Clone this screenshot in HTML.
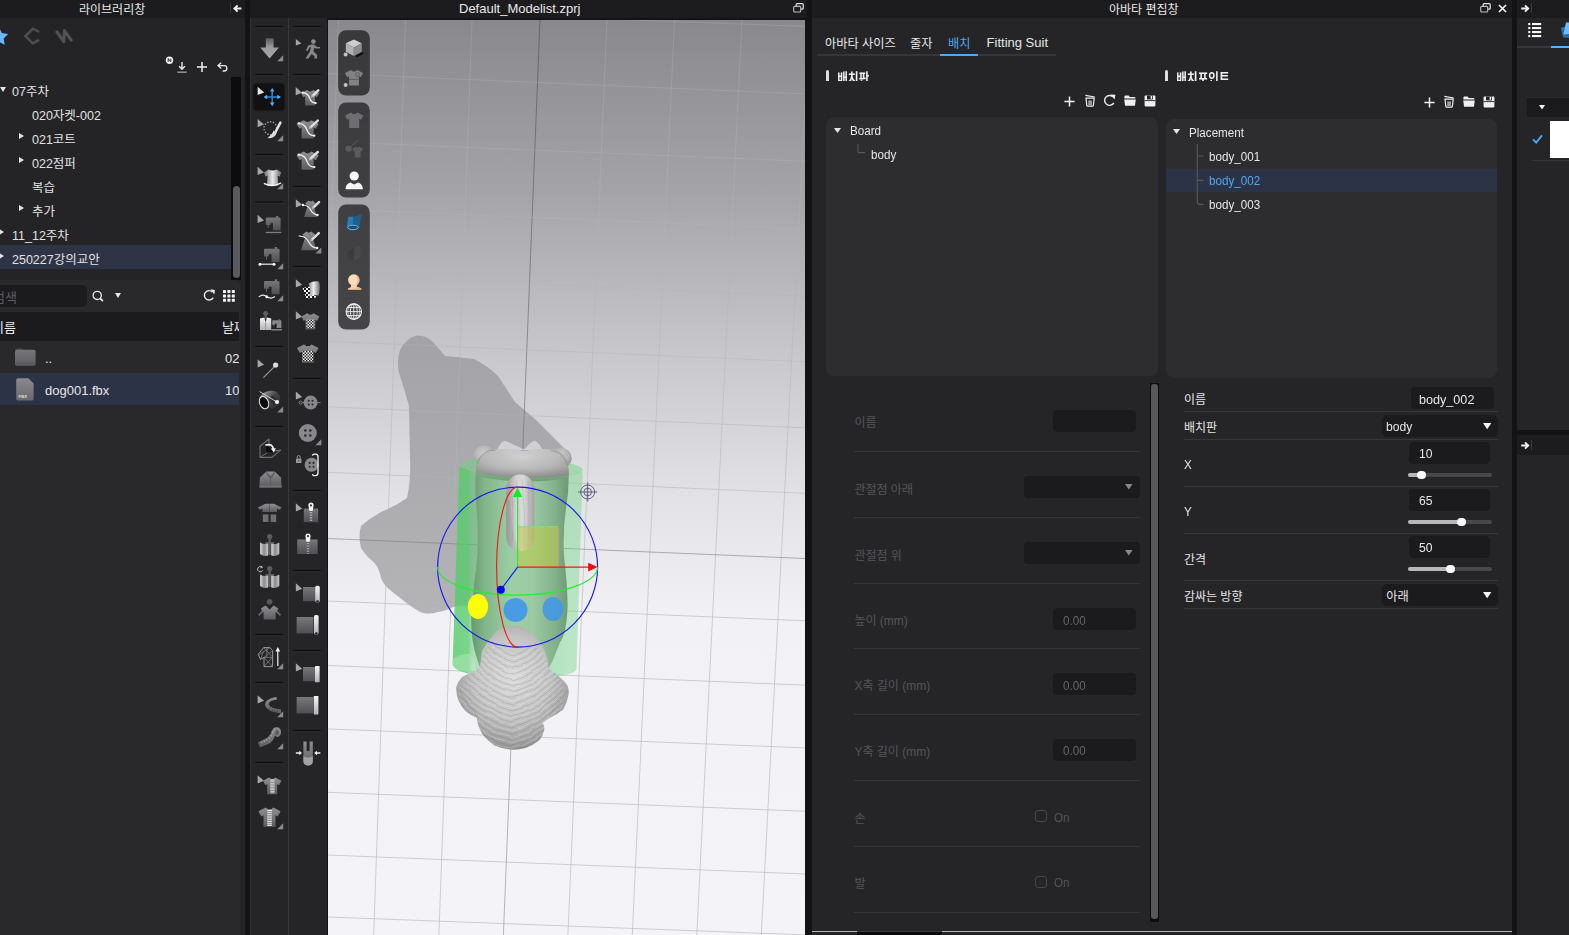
<!DOCTYPE html>
<html lang="ko">
<head>
<meta charset="utf-8">
<title>CLO - Default_Modelist.zprj</title>
<style>
*{box-sizing:border-box;margin:0;padding:0}
html,body{width:1569px;height:935px;overflow:hidden;background:#131315}
body{position:relative;font-family:"Liberation Sans","Noto Sans CJK KR",sans-serif;font-size:12px;color:#e6e6e6;-webkit-font-smoothing:antialiased}
.abs{position:absolute}
.panel{position:absolute;background:#252527}
.tbar{position:absolute;background:#1c1c1f;height:18px;top:0;color:#e8e8e8;font-size:12px;line-height:17px;text-align:center;white-space:nowrap}
.t{position:absolute;white-space:nowrap;line-height:1}
svg{position:absolute;overflow:visible}
/* LEFT */
#lib{left:0;top:18px;width:245px;height:917px;background:#242426}
.row{position:absolute;left:0;width:231px;height:24px;font-size:12.5px;line-height:23px;color:#e2e2e2;white-space:nowrap}
.row.sel{background:#2e3446}
.tri-r{position:absolute;width:0;height:0;border-left:5.4px solid #e6e6e6;border-top:3.9px solid transparent;border-bottom:3.9px solid transparent}
.tri-d{position:absolute;width:0;height:0;border-top:5px solid #e6e6e6;border-left:3.5px solid transparent;border-right:3.5px solid transparent}
/* toolbars */
#tb1{left:250px;top:18px;width:39px;height:917px;border-left:1px solid #323235;border-right:1px solid #38383b}
#tb2{left:289px;top:18px;width:38px;height:917px}
.sep{position:absolute;height:1px;width:28px;background:#0f0f11}
/* viewport */
#vp{position:absolute;left:328px;top:20px;width:477px;height:915px;overflow:hidden;background:linear-gradient(#88888d 0px,#a3a3a8 170px,#c6c6cb 330px,#e2e2e7 480px,#f1f1f6 600px,#f3f3f8 915px)}
/* avatar editor */
#av{left:812px;top:18px;width:700px;height:917px}
.tab{position:absolute;top:17px;font-size:13px;line-height:16px;color:#e8e8e8;white-space:nowrap}
.box{position:absolute;background:#2d2d30;border-radius:8px}
.tr{position:absolute;font-size:12px;line-height:24px;height:24px;color:#e4e4e4;white-space:nowrap}
.hl{position:absolute;height:1px;background:#38383b}
.inp{position:absolute;background:#1b1b1e;border-radius:4px;color:#e8e8e8;font-size:13px;white-space:nowrap}
.dis{color:#58585c}
.lx{display:inline-block;transform:scaleX(.97);transform-origin:0 50%}
</style>
</head>
<body>


<!-- ===== title bars ===== -->
<div class="tbar" style="left:0;width:245px"><span class="t" style="left:79px;top:3.8px;font-size:12px">라이브러리창</span>
  <i class="abs" style="left:230px;top:3px;width:1px;height:10px;background:#3a3a3d"></i>
  <svg style="left:233px;top:3.5px" width="9" height="9" viewBox="0 0 9 9"><path d="M8.4 4.5H2M4.6 1.4L1.4 4.5l3.2 3.1" fill="none" stroke="#f0f0f0" stroke-width="1.9"/></svg>
</div>
<div class="tbar" style="left:250px;width:557px"><span class="t" style="left:209px;top:1.7px;font-size:13px">Default_Modelist.zprj</span>
  <svg style="left:543px;top:3px" width="11" height="10" viewBox="0 0 11 10"><rect x="3.2" y="0.6" width="7" height="5.6" rx="1" fill="none" stroke="#e6e6e6" stroke-width="1.2"/><rect x="0.7" y="3.4" width="7" height="5.6" rx="1" fill="#1c1c1f" stroke="#bdbdbd" stroke-width="1.1"/></svg>
</div>
<div class="tbar" style="left:812px;width:700px"><span class="t" style="left:297px;top:3.8px;font-size:12px">아바타 편집창</span>
  <svg style="left:668px;top:3px" width="11" height="10" viewBox="0 0 11 10"><rect x="3.2" y="0.6" width="7" height="5.6" rx="1" fill="none" stroke="#e6e6e6" stroke-width="1.2"/><rect x="0.7" y="3.4" width="7" height="5.6" rx="1" fill="#1c1c1f" stroke="#bdbdbd" stroke-width="1.1"/></svg>
  <svg style="left:686px;top:4px" width="9" height="9" viewBox="0 0 9 9"><path d="M1 1L8 8M8 1L1 8" stroke="#f2f2f2" stroke-width="1.7"/></svg>
</div>
<div class="tbar" style="left:1517px;width:52px">
  <svg style="left:4px;top:4px" width="9" height="9" viewBox="0 0 9 9"><path d="M0.2 4.5H6.6M4 1.4L7.2 4.5 4 7.6" fill="none" stroke="#f0f0f0" stroke-width="1.9"/></svg>
  <i class="abs" style="left:14px;top:3px;width:1px;height:10px;background:#3a3a3d"></i>
</div>

<div id="lib" class="panel">
  <!-- top icons (coords relative to panel: y = abs-18) -->
  <svg style="left:0;top:0" width="80" height="30" viewBox="0 18 80 30"><path d="M-1 27.2l2.8 5.8 6.4 1 -4.6 4.5 1.1 6.3 -5.7 -3 -5.7 3 1.1 -6.3 -4.6 -4.5 6.4 -1z" fill="#69b8ff"/><path d="M39.6 32.4L33.4 29.2 26 36.4 33.4 43.6 39.6 40.2" fill="none" stroke="#38383b" stroke-width="2.4"/><path d="M38.8 31.6L32.6 28.6 25.2 36 32.6 43.4 38.8 39.8" fill="none" stroke="#4e4e52" stroke-width="2.2"/><path d="M57 32L63.8 41.6 64.4 30.6 71.2 40.2" fill="none" stroke="#525256" stroke-width="3.1" stroke-linecap="round" stroke-linejoin="round"/></svg>
  <!-- small action icons -->
  <svg style="left:165px;top:38px" width="9" height="9" viewBox="0 0 9 9"><circle cx="4.5" cy="4.2" r="3.7" fill="#f2f2f2"/><path d="M3.2 5.8V2.6L5.8 5.8V2.6" fill="none" stroke="#2a2a2d" stroke-width="1"/></svg>
  <svg style="left:177px;top:43px" width="10" height="13" viewBox="0 0 10 13"><path d="M5 1V8M2.1 5.2L5 8.2 7.9 5.2" fill="none" stroke="#e8e8e8" stroke-width="1.4"/><path d="M0.4 11.2H9.6" stroke="#8e8e92" stroke-width="1.6"/></svg>
  <svg style="left:197px;top:44px" width="10" height="10" viewBox="0 0 10 10"><path d="M5 0V10M0 5H10" stroke="#f0f0f0" stroke-width="1.5"/></svg>
  <svg style="left:217px;top:44px" width="11" height="10" viewBox="0 0 11 10"><path d="M4.2 0.8L1 3.6l3.2 2.8M1.2 3.6H7.2a2.7 2.7 0 0 1 0 5.4H5.6" fill="none" stroke="#e8e8e8" stroke-width="1.3"/></svg>

  <!-- tree -->
  
  <div class="row" style="top:59.2px"><i class="tri-d" style="left:0;top:9.8px"></i><span class="t" style="left:12px;top:8.4px">07주차</span></div>
  <div class="row" style="top:83.2px"><span class="t" style="left:32px;top:8.4px">020자켓-002</span></div>
  <div class="row" style="top:107.2px"><i class="tri-r" style="left:19px;top:7.8px"></i><span class="t" style="left:32px;top:8.4px">021코트</span></div>
  <div class="row" style="top:131.2px"><i class="tri-r" style="left:19px;top:7.8px"></i><span class="t" style="left:32px;top:8.4px">022점퍼</span></div>
  <div class="row" style="top:155.2px"><span class="t" style="left:32px;top:8.4px">복습</span></div>
  <div class="row" style="top:179.2px"><i class="tri-r" style="left:19px;top:7.8px"></i><span class="t" style="left:32px;top:8.4px">추가</span></div>
  <div class="row" style="top:203.2px"><i class="tri-r" style="left:-1px;top:7.8px"></i><span class="t" style="left:12px;top:8.4px">11_12주차</span></div>
  <div class="row sel" style="top:227.2px"><i class="tri-r" style="left:-1px;top:7.8px"></i><span class="t" style="left:12px;top:8.4px">250227강의교안</span></div>
  <!-- scrollbar -->
  <div class="abs" style="left:231px;top:59px;width:10px;height:203px;background:#0c0c0e"></div>
  <div class="abs" style="left:233px;top:168px;width:7px;height:92px;background:#5a5a5d;border-radius:3.5px"></div>

  <!-- file browser -->
  <div class="abs" style="left:0;top:262px;width:240px;height:655px;background:#29292c;border-top-right-radius:6px"></div>
  <div class="abs" style="left:-6px;top:267px;width:93px;height:22px;background:#1b1b1e;border-radius:5px"></div>
  <span class="t" style="left:-7px;top:273px;font-size:13px;color:#5d5d61">검색</span>
  <svg style="left:91px;top:271px" width="14" height="14" viewBox="0 0 14 14"><circle cx="6.2" cy="6.4" r="4.1" fill="none" stroke="#ececec" stroke-width="1.3"/><path d="M9.4 9.6L11.4 11.6" stroke="#ececec" stroke-width="1.8" stroke-linecap="round"/></svg>
  <i class="tri-d" style="left:114.5px;top:275px"></i>
  <svg style="left:202px;top:271px" width="14" height="13" viewBox="0 0 14 13"><path d="M11.2 8.6A4.7 4.7 0 1 1 10.4 3" fill="none" stroke="#ececec" stroke-width="1.4"/><path d="M8 0.6h4.6v4.6z" fill="#ececec" transform="rotate(8 10 3)"/></svg>
  <svg style="left:223px;top:272px" width="12" height="12" viewBox="0 0 12 12" fill="#f2f2f2"><rect x="0" y="0" width="3" height="3" rx=".5"/><rect x="4.4" y="0" width="3" height="3" rx=".5"/><rect x="8.8" y="0" width="3" height="3" rx=".5"/><rect x="0" y="4.4" width="3" height="3" rx=".5"/><rect x="4.4" y="4.4" width="3" height="3" rx=".5"/><rect x="8.8" y="4.4" width="3" height="3" rx=".5"/><rect x="0" y="8.8" width="3" height="3" rx=".5"/><rect x="4.4" y="8.8" width="3" height="3" rx=".5"/><rect x="8.8" y="8.8" width="3" height="3" rx=".5"/></svg>
  <!-- header -->
  <div class="abs" style="left:0;top:294px;width:239px;height:29px;background:#1b1b1e;overflow:hidden">
    <span class="t" style="left:-8px;top:9px;font-size:13px;color:#ececec">이름</span>
    <span class="t" style="left:222px;top:9px;font-size:13px;color:#ececec">날짜</span>
  </div>
  <!-- rows -->
  <div class="abs" style="left:0;top:323px;width:239px;height:32px;overflow:hidden">
    <svg style="left:15px;top:7px" width="21" height="18" viewBox="0 0 21 18"><defs><linearGradient id="fg" x1="0" y1="0" x2="0" y2="1"><stop offset="0" stop-color="#77777b"/><stop offset="1" stop-color="#5c5c60"/></linearGradient></defs><path d="M0 2.2Q0 0.4 1.6 0.4H7l1.6 1.4H0z" fill="#4a4a4e"/><rect x="0" y="1.8" width="20.6" height="16" rx="1.8" fill="url(#fg)"/><path d="M0.4 15.2H20.2" stroke="#505054" stroke-width=".8"/></svg>
    <span class="t" style="left:45px;top:11px;font-size:13px">..</span>
    <span class="t" style="left:225px;top:11px;font-size:13px">02</span>
  </div>
  <div class="abs" style="left:0;top:355px;width:239px;height:32px;background:#2d3346;overflow:hidden">
    <svg style="left:16px;top:5px" width="18" height="23" viewBox="0 0 18 23"><defs><linearGradient id="fg2" x1="0" y1="0" x2="0" y2="1"><stop offset="0" stop-color="#8a8a8e"/><stop offset="1" stop-color="#6a6a6e"/></linearGradient></defs><path d="M1.8 0.3H12.4L17.6 5.6V20.8Q17.6 22.4 16 22.4H1.8Q0.2 22.4 0.2 20.8V1.9Q0.2 0.3 1.8 0.3z" fill="url(#fg2)"/><text x="2.6" y="19.6" font-family="Liberation Sans,sans-serif" font-size="4.2" font-weight="700" fill="#dedede">FBX</text></svg>
    <span class="t" style="left:45px;top:11px;font-size:13px">dog001.fbx</span>
    <span class="t" style="left:225px;top:11px;font-size:13px">10</span>
  </div>
</div>

<!-- ===== TOOLBARS ===== -->
<div id="tb1" class="panel"></div>
<div id="tb2" class="panel"></div>
<svg style="left:250px;top:18px" width="77" height="917" viewBox="250 18 77 917">
<defs>
<linearGradient id="g1" x1="0" y1="0" x2="0" y2="1"><stop offset="0" stop-color="#909094"/><stop offset="1" stop-color="#5c5c60"/></linearGradient>
<linearGradient id="g2" x1="0" y1="0" x2="0" y2="1"><stop offset="0" stop-color="#77777b"/><stop offset="1" stop-color="#505054"/></linearGradient>
<linearGradient id="g3" x1="0" y1="0" x2="0" y2="1"><stop offset="0" stop-color="#5a5a5e"/><stop offset=".45" stop-color="#9c9ca0"/><stop offset="1" stop-color="#a4a4a8"/></linearGradient>
<linearGradient id="gw" x1="0" y1="0" x2="0" y2="1"><stop offset="0" stop-color="#f6f6f6"/><stop offset="1" stop-color="#b4b4b8"/></linearGradient>
<linearGradient id="gh" x1="0" y1="0" x2="1" y2="0"><stop offset="0" stop-color="#6a6a6e"/><stop offset=".5" stop-color="#e8e8e8"/><stop offset="1" stop-color="#6a6a6e"/></linearGradient>
<linearGradient id="gh2" x1="0" y1="0" x2="1" y2="0"><stop offset="0" stop-color="#f0f0f0"/><stop offset=".5" stop-color="#77777b"/><stop offset="1" stop-color="#f0f0f0"/></linearGradient>
<pattern id="chk" width="3" height="3" patternUnits="userSpaceOnUse"><rect width="3" height="3" fill="#fafafa"/><rect width="1.5" height="1.5" fill="#222"/><rect x="1.5" y="1.5" width="1.5" height="1.5" fill="#222"/></pattern>
<pattern id="chk2" width="4" height="4" patternUnits="userSpaceOnUse"><rect width="4" height="4" fill="#f4f4f4"/><rect width="2" height="2" fill="#161618"/><rect x="2" y="2" width="2" height="2" fill="#161618"/></pattern>
</defs>
<rect x="255" y="26" width="28" height="1.3" fill="#0e0e10"/><rect x="255" y="27.3" width="28" height=".9" fill="#2f2f32"/>
<rect x="255" y="74" width="28" height="1.3" fill="#0e0e10"/><rect x="255" y="75.3" width="28" height=".9" fill="#2f2f32"/>
<rect x="255" y="154" width="28" height="1.3" fill="#0e0e10"/><rect x="255" y="155.3" width="28" height=".9" fill="#2f2f32"/>
<rect x="255" y="201.5" width="28" height="1.3" fill="#0e0e10"/><rect x="255" y="202.8" width="28" height=".9" fill="#2f2f32"/>
<rect x="255" y="346" width="28" height="1.3" fill="#0e0e10"/><rect x="255" y="347.3" width="28" height=".9" fill="#2f2f32"/>
<rect x="255" y="426" width="28" height="1.3" fill="#0e0e10"/><rect x="255" y="427.3" width="28" height=".9" fill="#2f2f32"/>
<rect x="255" y="634" width="28" height="1.3" fill="#0e0e10"/><rect x="255" y="635.3" width="28" height=".9" fill="#2f2f32"/>
<rect x="255" y="682" width="28" height="1.3" fill="#0e0e10"/><rect x="255" y="683.3" width="28" height=".9" fill="#2f2f32"/>
<rect x="255" y="762" width="28" height="1.3" fill="#0e0e10"/><rect x="255" y="763.3" width="28" height=".9" fill="#2f2f32"/>
<rect x="293" y="26" width="28" height="1.3" fill="#0e0e10"/><rect x="293" y="27.3" width="28" height=".9" fill="#2f2f32"/>
<rect x="293" y="74" width="28" height="1.3" fill="#0e0e10"/><rect x="293" y="75.3" width="28" height=".9" fill="#2f2f32"/>
<rect x="293" y="186" width="28" height="1.3" fill="#0e0e10"/><rect x="293" y="187.3" width="28" height=".9" fill="#2f2f32"/>
<rect x="293" y="266" width="28" height="1.3" fill="#0e0e10"/><rect x="293" y="267.3" width="28" height=".9" fill="#2f2f32"/>
<rect x="293" y="378" width="28" height="1.3" fill="#0e0e10"/><rect x="293" y="379.3" width="28" height=".9" fill="#2f2f32"/>
<rect x="293" y="490" width="28" height="1.3" fill="#0e0e10"/><rect x="293" y="491.3" width="28" height=".9" fill="#2f2f32"/>
<rect x="293" y="570" width="28" height="1.3" fill="#0e0e10"/><rect x="293" y="571.3" width="28" height=".9" fill="#2f2f32"/>
<rect x="293" y="650" width="28" height="1.3" fill="#0e0e10"/><rect x="293" y="651.3" width="28" height=".9" fill="#2f2f32"/>
<rect x="293" y="730" width="28" height="1.3" fill="#0e0e10"/><rect x="293" y="731.3" width="28" height=".9" fill="#2f2f32"/>
<path d="M265.8 38.2H273.6V47.4H279L269.6 58.4 260.2 47.4H265.8z" fill="url(#g3)"/>
<path d="M283.2 55.2V61.2H277.2z" fill="#8a8a8e"/>
<rect x="253" y="83.2" width="31.8" height="27.5" rx="3.6" fill="#111113" stroke="#1d1d20" stroke-width="1"/>
<path d="M257.6 86.7V95.10000000000001L264.20000000000005 92.412z" fill="#e2e2e2"/>
<path d="M272.2 90V104M265.6 97H279" stroke="#2f86d6" stroke-width="1.5"/>
<path d="M272.2 88l2.2 3.6h-4.4zM272.2 106.2l2.2-3.6h-4.4zM263.6 97l3.6-2.2v4.4zM281 97l-3.6-2.2v4.4z" fill="#4fb0ff"/>
<path d="M257.6 119V127.2L264.0 124.576z" fill="#a6a6aa"/>
<circle cx="270.4" cy="128.2" r="6.4" fill="none" stroke="#b4b4b8" stroke-width="1.2" stroke-dasharray="1.3 1.6"/>
<path d="M280.4 122.6L276.2 130.6" stroke="#e2e2e2" stroke-width="2.5" stroke-linecap="round"/>
<path d="M277 132L273.8 130.4Q272.4 134.4 267.6 138Q275 139 277 132z" fill="#dcdcdc"/>
<path d="M283.2 135.2V141.2H277.2z" fill="#8a8a8e"/>
<path d="M257.6 166.8V175.0L264.0 172.376z" fill="#a6a6aa"/>
<path d="M268.6 169.4Q272.6 171.6 276.6 169.4L281.4 172.6 279.6 176.8 277.6 175.6 278.2 185.6H267L267.6 175.6 265.6 176.8 263.8 172.6z" fill="url(#gh)"/>
<path d="M264.4 183.6Q272.4 187.6 280.6 183.2" fill="none" stroke="#f4f4f4" stroke-width="1.5" stroke-linecap="round"/>
<path d="M283.2 183.2V189.2H277.2z" fill="#8a8a8e"/>
<path d="M257.6 214.8V223.0L264.0 220.376z" fill="#a6a6aa"/>
<path d="M265.8 218.79999999999998Q265.8 217.6 267.0 217.6H279.40000000000003Q280.6 217.6 280.6 218.79999999999998V230.2H273.0V223.0H270.40000000000003V225.0H265.8z" fill="url(#g2)"/>
<rect x="276.0" y="216.0" width="2.2" height="1.8" fill="#77777b"/>
<path d="M268.2 225.0V228.0" stroke="#6c6c70" stroke-width="0.9"/>
<rect x="265.8" y="231.8" width="15.4" height="1.3" fill="#808084"/>
<path d="M264 249.91Q264 248.65 265.26 248.65H278.28Q279.54 248.65 279.54 249.91V261.88H271.56V254.32H268.83V256.42H264z" fill="url(#g2)"/>
<rect x="274.71" y="246.97" width="2.3100000000000005" height="1.8900000000000001" fill="#77777b"/>
<path d="M266.52 256.42V259.57" stroke="#6c6c70" stroke-width="0.9450000000000001"/>
<path d="M260 264.2H274" stroke="#e8e8e8" stroke-width="1.2"/><circle cx="260" cy="264.2" r="1.5" fill="#f4f4f4"/><circle cx="274" cy="264.2" r="1.5" fill="#f4f4f4"/>
<path d="M283.2 263.2V269.2H277.2z" fill="#8a8a8e"/>
<path d="M264 282.31Q264 281.05 265.26 281.05H278.28Q279.54 281.05 279.54 282.31V294.28H271.56V286.72H268.83V288.82H264z" fill="url(#g2)"/>
<rect x="274.71" y="279.37" width="2.3100000000000005" height="1.8900000000000001" fill="#77777b"/>
<path d="M266.52 288.82V291.97" stroke="#6c6c70" stroke-width="0.9450000000000001"/>
<path d="M259.2 296.6Q263 293.6 266.8 296.6T274.6 296.8" fill="none" stroke="#f4f4f4" stroke-width="1.2" stroke-linecap="round"/>
<circle cx="266.8" cy="296.8" r="1.5" fill="#f4f4f4"/>
<path d="M283.2 295.2V301.2H277.2z" fill="#8a8a8e"/>
<circle cx="265.6" cy="313.4" r="2.4" fill="#5e5e62"/><rect x="264.6" y="314" width="2" height="5" fill="#5e5e62"/>
<path d="M260 318.6L264.2 317.4 265.6 322 267 317.4 271.2 318.6V330H260z" fill="url(#gw)"/>
<path d="M265.6 322V330" stroke="#8a8a8e" stroke-width=".8"/>
<path d="M272.2 320.964Q272.2 320.22 272.944 320.22H280.632Q281.376 320.22 281.376 320.964V328.03200000000004H276.664V323.56800000000004H275.05199999999996V324.80800000000005H272.2z" fill="#88888c"/>
<rect x="278.524" y="319.228" width="1.364" height="1.116" fill="#77777b"/>
<path d="M273.688 324.80800000000005V326.668" stroke="#6c6c70" stroke-width="0.558"/>
<rect x="271.4" y="329.2" width="10.6" height="1.2" fill="#98989c"/>
<path d="M257.6 359.2V367.4L264.0 364.776z" fill="#a6a6aa"/>
<path d="M263.4 377.6L274.4 366.6" stroke="#9a9a9e" stroke-width="1.2"/><circle cx="275.6" cy="365" r="2.6" fill="#dcdcdc"/>
<defs><linearGradient id="gc" x1="0" y1="0" x2="1" y2="1"><stop offset="0" stop-color="#b4b4b8"/><stop offset=".5" stop-color="#444448"/><stop offset="1" stop-color="#2a2a2d"/></linearGradient></defs>
<path d="M259.2 397.2Q266 388.6 276 391.4Q281.4 394.4 279.6 402.4Q277 409 268 408.4z" fill="url(#gc)"/>
<ellipse cx="264" cy="402.6" rx="4.4" ry="6.4" transform="rotate(-22 264 402.6)" fill="#0c0c0e" stroke="#e8e8e8" stroke-width="1"/>
<ellipse cx="273.6" cy="400.4" rx="2.8" ry="4.4" transform="rotate(-22 273.6 400.4)" fill="#2c2c2f"/>
<path d="M259.6 391.6L276 401.4" stroke="#d8d8d8" stroke-width=".9"/><circle cx="277" cy="402" r="2.1" fill="#f0f0f0"/>
<path d="M283.2 406.6V412.6H277.2z" fill="#8a8a8e"/>
<path d="M260 446.2L269 439V451.6L280.6 450 272 457.4H260z" fill="none" stroke="#707074" stroke-width="1.1" stroke-linejoin="round"/>
<path d="M260 457.4L269 451.6" stroke="#707074" stroke-width="1"/>
<path d="M266.4 444.6L274.6 452 266.4 452.6z" fill="#0a0a0c"/>
<path d="M265.4 445.2Q272.4 442.8 273.6 449.6" fill="none" stroke="#f4f4f4" stroke-width="1.7"/><path d="M270.8 448.6L275.8 448.2 273.8 452.6z" fill="#f4f4f4"/>
<path d="M266.4 471.6H274.6L281 477.6 281.6 486.6H259.4L260 477.6z" fill="url(#g1)"/>
<path d="M266.4 471.6L270.5 476.6 274.6 471.6V474L270.5 479 266.4 474z" fill="#5c5c60"/>
<path d="M270.5 478V486" stroke="#5a5a5e" stroke-width=".8"/><rect x="259.4" y="486" width="22.2" height="2" fill="#5a5a5e"/><path d="M259.4 486.2H281.6" stroke="#8a8a8e" stroke-width=".7"/>
<path d="M265.4 503.8H269.6V512H262.4V508.4L260 510 257.8 507.6z" fill="url(#g1)"/>
<path d="M274 503.8H269.9V512H277V508.4L279.4 510 281.6 507.6z" fill="url(#g1)"/>
<rect x="262.8" y="514.4" width="5.6" height="7.6" fill="#707074"/><rect x="270.6" y="514.4" width="5.6" height="7.6" fill="#707074"/>
<defs><linearGradient id="ghf" x1="0" y1="0" x2="1" y2="0"><stop offset="0" stop-color="#d8d8d8"/><stop offset=".5" stop-color="#8a8a8e"/><stop offset="1" stop-color="#c8c8c8"/></linearGradient></defs>
<circle cx="269.7" cy="536.6" r="2.7" fill="#5a5a5e"/><path d="M268.5 538H270.9V542H274.09999999999997V555H265.3V542H268.5z" fill="#5a5a5e"/>
<path d="M260.09999999999997 542.4Q263.7 545 268.09999999999997 543.6V555.6Q263.7 556.8 260.09999999999997 554z" fill="url(#ghf)"/>
<path d="M279.3 542.4Q275.7 545 271.3 543.6V555.6Q275.7 556.8 279.3 554z" fill="url(#ghf)"/>
<circle cx="269.7" cy="568.6" r="2.7" fill="#5a5a5e"/><path d="M268.5 570H270.9V574H274.09999999999997V587H265.3V574H268.5z" fill="#5a5a5e"/>
<path d="M260.09999999999997 574.4Q263.7 577 268.09999999999997 575.6V587.6Q263.7 588.8 260.09999999999997 586z" fill="url(#ghf)"/>
<path d="M279.3 574.4Q275.7 577 271.3 575.6V587.6Q275.7 588.8 279.3 586z" fill="url(#ghf)"/>
<path d="M262.6 570.2A2.6 2.6 0 1 1 261.8 567.2" fill="none" stroke="#b8b8bc" stroke-width="1"/><path d="M260.8 565.4L263.2 567.2 260.6 568.4z" fill="#b8b8bc"/>
<circle cx="269.6" cy="601.8" r="2.8" fill="#58585c"/>
<path d="M258.2 614.6L263.2 609.4 262.8 612.4 259.2 616zM281 614.6L276 609.4 276.4 612.4 280 616z" fill="#6a6a6e"/>
<path d="M265.6 605.4L269.6 609.4 273.6 605.4 278.4 608.6 276.4 612.6 275.6 612V619.6H263.6V612L262.8 612.6 260.8 608.6z" fill="url(#g1)"/>
<path d="M263.6 647.6H270L272.6 650.6V666.6H264V657.4L260.4 659.4 258.2 654.4z" fill="none" stroke="#9a9a9e" stroke-width="1" stroke-linejoin="round"/>
<path d="M263.6 647.6L272.6 657M270 647.6L258.6 655M264 657.4L272.6 650.6M264 657.4H272.6M264 666.6L272.6 657M264 657.4L272.6 666.6M266.8 647.6V657.4M260.4 659.4L263.6 651" fill="none" stroke="#8a8a8e" stroke-width=".7"/>
<path d="M277.8 651V666" stroke="#f2f2f2" stroke-width="1.2"/><path d="M277.8 647l2.4 4.6h-4.8z" fill="#f2f2f2"/>
<path d="M283.2 663.2V669.2H277.2z" fill="#8a8a8e"/>
<path d="M257.6 695.2V703.4000000000001L264.0 700.7760000000001z" fill="#a6a6aa"/>
<path d="M276.6 697Q264 699 265.2 705.6Q267 712 281 713.4V709.6Q270.4 708.4 268.6 704.6Q268.6 700.6 276.8 699.8z" fill="url(#g1)"/>
<path d="M270 707.6v2M272.4 708.8v2M274.8 709.6v2M277.2 710v2" stroke="#3a3a3d" stroke-width=".6"/>
<path d="M283.2 711.2V717.2H277.2z" fill="#8a8a8e"/>
<path d="M258 742.6L267.6 737.6Q271 735 272 730.6Q274 726 278.6 727.6Q282.4 730.6 280.4 735Q277.6 738.6 274.8 735.6Q273.6 741 269.6 743.4L260 747.4z" fill="url(#g1)"/>
<path d="M276.6 729.4Q279.8 731 278.4 734.4Q276.4 736 274.8 733.6" fill="#5a5a5e"/>
<path d="M261.4 741.4l.8 1.8M263.8 740.2l.8 1.8M266.2 739l.8 1.8M268.6 737.4l1 1.6M270.6 735l1.4 1.2M271.8 732l1.6.6" stroke="#d8d8d8" stroke-width=".6"/>
<path d="M283.2 743.2V749.2H277.2z" fill="#8a8a8e"/>
<path d="M257.6 775.2V783.4000000000001L264.0 780.7760000000001z" fill="#a6a6aa"/>
<path d="M269.1 777.4Q272.2 780.8 275.3 777.4L281.4 780.8 279.0 785.3 277.2 784.1 277.2 794.2 267.2 794.2 267.2 784.1 265.4 785.3 263.0 780.8z" fill="url(#g1)"/>
<rect x="270.4" y="779.6" width="4" height="13.6" fill="#f2f2f2"/><path d="M270.4 781h4M270.4 782.6h4M270.4 784.2h4M270.4 785.8h4M270.4 787.4h4M270.4 789h4M270.4 790.6h4M270.4 792.2h4" stroke="#333" stroke-width=".55"/>
<path d="M265.7 807.4Q269.5 811.3 273.3 807.4L280.6 811.3 277.7 816.5 275.5 815.2 275.5 826.8 263.5 826.8 263.5 815.2 261.3 816.5 258.4 811.3z" fill="url(#g1)"/>
<rect x="267.2" y="810" width="4.6" height="15.8" fill="#f2f2f2"/><path d="M267.2 811.6h4.6M267.2 813.4h4.6M267.2 815.2h4.6M267.2 817h4.6M267.2 818.8h4.6M267.2 820.6h4.6M267.2 822.4h4.6M267.2 824.2h4.6" stroke="#333" stroke-width=".6"/>
<path d="M283.2 823.2V829.2H277.2z" fill="#8a8a8e"/>
<path d="M295.8 39V45.6L301.40000000000003 43.488z" fill="#a6a6aa"/>
<circle cx="313.4" cy="41.6" r="2.3" fill="#8c8c90"/>
<path d="M311.6 44.4L308.2 45.6 306 50.4 307.6 51 309.6 47.4 311 47 309.6 52.2 305.4 58.6H308.6L311.6 54 314.6 56.2 314.4 58.6H317L317.2 55 313.4 51.6 314.4 48 316.4 48.6H320V47H317L314 44.6z" fill="#87878b"/>
<path d="M295.7 87.1V95.3L302.09999999999997 92.67599999999999z" fill="#a6a6aa"/>
<path d="M307.0 90.0Q310.1 93.1 313.2 90.0L319.2 93.1 316.8 97.2 315.0 96.2 315.0 105.4 305.2 105.4 305.2 96.2 303.4 97.2 301.0 93.1z" fill="url(#g1)"/>
<path d="M302.8 92.6Q307.9 93.1 309.6 98.0T315.6 103.1" fill="none" stroke="#f4f4f4" stroke-width="1.25" stroke-linecap="round"/>
<circle cx="302.8" cy="92.6" r="1.15" fill="#f4f4f4"/><circle cx="315.6" cy="103.1" r="1.15" fill="#f4f4f4"/>
<path d="M318.3 90.4L313.0 95.5" stroke="#dedede" stroke-width="2.5" stroke-linecap="round"/>
<path d="M313.8 96.4L310.6 97.7L312.1 94.6z" fill="#b8b8bc"/>
<path d="M303.8 120.2Q307.6 123.8 311.4 120.2L318.7 123.8 315.8 128.8 313.6 127.5 313.6 138.4 301.6 138.4 301.6 127.5 299.4 128.8 296.5 123.8z" fill="url(#g1)"/>
<path d="M298.7 123.3Q304.9 123.8 306.9 129.7T314.3 135.7" fill="none" stroke="#f4f4f4" stroke-width="1.25" stroke-linecap="round"/>
<circle cx="298.7" cy="123.3" r="1.15" fill="#f4f4f4"/><circle cx="314.3" cy="135.7" r="1.15" fill="#f4f4f4"/>
<path d="M317.8 120.6L310.6 127.1" stroke="#dedede" stroke-width="2.5" stroke-linecap="round"/>
<path d="M311.5 128.1L308.3 129.3L309.8 126.2z" fill="#b8b8bc"/>
<path d="M303.8 151.6Q307.6 155.2 311.4 151.6L318.7 155.2 315.8 160.2 313.6 158.9 313.6 169.8 301.6 169.8 301.6 158.9 299.4 160.2 296.5 155.2z" fill="url(#g1)"/>
<path d="M298.7 154.7Q304.9 155.2 306.9 161.1T314.3 167.1" fill="none" stroke="#f4f4f4" stroke-width="1.25" stroke-linecap="round"/>
<circle cx="298.7" cy="154.7" r="1.15" fill="#f4f4f4"/><circle cx="314.3" cy="167.1" r="1.15" fill="#f4f4f4"/>
<path d="M317.8 152.0L310.6 158.5" stroke="#dedede" stroke-width="2.5" stroke-linecap="round"/>
<path d="M311.5 159.5L308.3 160.7L309.8 157.6z" fill="#b8b8bc"/>
<path d="M295.8 199.2V207.39999999999998L302.2 204.77599999999998z" fill="#a6a6aa"/>
<path d="M308.6 200.6Q310.6 202.6 312.6 200.6L315.8 203.2 313.8 206.5 317.1 217.0 304.1 217.0 307.4 206.5 305.4 203.2z" fill="url(#g1)"/>
<path d="M302.6 205.0Q308.3 205.2 310.6 209.8T317.5 215.0" fill="none" stroke="#f4f4f4" stroke-width="1.25" stroke-linecap="round"/>
<path d="M319.0 202.2L313.8 207.2" stroke="#dedede" stroke-width="2.5" stroke-linecap="round"/>
<path d="M314.6 208.1L311.5 209.5L312.9 206.3z" fill="#b8b8bc"/>
<circle cx="303" cy="205" r="1.2" fill="#f4f4f4"/><circle cx="317.4" cy="215" r="1.2" fill="#f4f4f4"/>
<path d="M306.3 231.6Q308.8 233.8 311.3 231.6L315.1 234.6 312.7 238.3 316.7 250.2 300.9 250.2 304.9 238.3 302.5 234.6z" fill="url(#g1)"/>
<path d="M299.2 236.0Q306.0 236.2 308.8 242.0T317.2 248.0" fill="none" stroke="#f4f4f4" stroke-width="1.25" stroke-linecap="round"/>
<path d="M318.8 233.2L312.2 239.4" stroke="#dedede" stroke-width="2.5" stroke-linecap="round"/>
<path d="M313.0 240.4L309.9 241.6L311.3 238.5z" fill="#b8b8bc"/>
<circle cx="317.2" cy="248" r="1.2" fill="#f4f4f4"/>
<path d="M321.4 247.4V253.4H315.4z" fill="#8a8a8e"/>
<path d="M295.8 279.2V287.4L302.2 284.776z" fill="#a6a6aa"/>
<path d="M302.6 288L312.4 286 316.6 297.4 306.4 298.6z" fill="url(#chk2)"/>
<path d="M308.6 283.4Q314 280.4 319 281.6Q321 288 318.6 295.6Q314 294.4 309.4 296.6Q311.4 289.6 308.6 283.4z" fill="url(#ghs)"/>
<defs><linearGradient id="ghs" x1="0" y1="0" x2="1" y2="0"><stop offset="0" stop-color="#8a8a8e"/><stop offset=".45" stop-color="#f0f0f0"/><stop offset="1" stop-color="#6a6a6e"/></linearGradient></defs>
<path d="M295.8 311.2V319.4L302.2 316.776z" fill="#a6a6aa"/>
<path d="M307.3 313.2Q310.4 316.5 313.5 313.2L319.4 316.5 317.1 320.9 315.3 319.8 315.3 329.6 305.5 329.6 305.5 319.8 303.7 320.9 301.4 316.5z" fill="url(#g1)"/>
<rect x="306.4" y="319" width="8" height="9" fill="url(#chk)"/>
<path d="M304.1 344.4Q307.8 348.1 311.5 344.4L318.6 348.1 315.8 353.0 313.6 351.8 313.6 362.8 302.0 362.8 302.0 351.8 299.8 353.0 297.0 348.1z" fill="url(#g1)"/>
<rect x="302.6" y="351" width="10.4" height="10.2" fill="url(#chk)"/>
<path d="M295.8 391.4V399.59999999999997L302.2 396.976z" fill="#a6a6aa"/>
<path d="M301 402.6H320.6" stroke="#77777b" stroke-width="1.1"/><circle cx="300.6" cy="402.6" r="1.5" fill="#252527" stroke="#8a8a8e" stroke-width=".9"/>
<circle cx="310.6" cy="402.6" r="7" fill="#88888c"/>
<circle cx="308.70000000000005" cy="400.70000000000005" r="1.05" fill="#2a2a2d"/>
<circle cx="308.70000000000005" cy="404.5" r="1.05" fill="#2a2a2d"/>
<circle cx="312.5" cy="400.70000000000005" r="1.05" fill="#2a2a2d"/>
<circle cx="312.5" cy="404.5" r="1.05" fill="#2a2a2d"/>
<circle cx="307.8" cy="433" r="9" fill="#88888c"/>
<circle cx="305.3" cy="430.5" r="1.3" fill="#2a2a2d"/>
<circle cx="305.3" cy="435.5" r="1.3" fill="#2a2a2d"/>
<circle cx="310.3" cy="430.5" r="1.3" fill="#2a2a2d"/>
<circle cx="310.3" cy="435.5" r="1.3" fill="#2a2a2d"/>
<path d="M321.4 439.2V445.2H315.4z" fill="#8a8a8e"/>
<rect x="296" y="458.4" width="5.4" height="4.6" rx=".6" fill="#9a9a9e"/><path d="M297.2 458.4V457a1.5 1.5 0 0 1 3 0V458.4" fill="none" stroke="#9a9a9e" stroke-width=".9"/><circle cx="298.7" cy="460.6" r=".7" fill="#333"/>
<circle cx="311.6" cy="464.8" r="7" fill="#88888c"/>
<circle cx="309.70000000000005" cy="462.90000000000003" r="1.05" fill="#2a2a2d"/>
<circle cx="309.70000000000005" cy="466.7" r="1.05" fill="#2a2a2d"/>
<circle cx="313.5" cy="462.90000000000003" r="1.05" fill="#2a2a2d"/>
<circle cx="313.5" cy="466.7" r="1.05" fill="#2a2a2d"/>
<path d="M312.4 455.6Q312.6 454.2 314.2 454.2H315.6Q318 454.4 318 457V472.4Q318 475.4 315.6 475.6H314.2Q312.6 475.6 312.4 474.2" fill="none" stroke="#f2f2f2" stroke-width="1.3"/>
<path d="M295.8 503.2V511.4L302.2 508.776z" fill="#a6a6aa"/>
<rect x="303.8" y="508.6" width="14.4" height="13.6" fill="url(#g2)"/>
<path d="M311 509.6V521.6" stroke="#e8e8e8" stroke-width="2.2" stroke-dasharray="1.3 1.2"/>
<path d="M311 509.6V521.6" stroke="#3a3a3d" stroke-width=".7"/>
<path d="M308.4 505.20000000000005a2.6 2.6 0 0 1 5.2 0L312.7 511.0H309.3z" fill="#f2f2f2"/><circle cx="311" cy="505.40000000000003" r="1.1" fill="#3a3a3d"/>
<rect x="297.2" y="539.4" width="20.4" height="14.6" fill="url(#g2)"/>
<path d="M308 540.4V553.4" stroke="#e8e8e8" stroke-width="2.2" stroke-dasharray="1.3 1.2"/>
<path d="M308 540.4V553.4" stroke="#3a3a3d" stroke-width=".7"/>
<path d="M305.4 536.0a2.6 2.6 0 0 1 5.2 0L309.7 541.8H306.3z" fill="#f2f2f2"/><circle cx="308" cy="536.1999999999999" r="1.1" fill="#3a3a3d"/>
<path d="M295.8 583.2V591.4000000000001L302.2 588.7760000000001z" fill="#a6a6aa"/>
<rect x="303" y="587" width="12.4" height="14.2" fill="url(#g2)"/>
<rect x="315.2" y="585.8" width="4.6" height="16.6" rx="1.6" fill="url(#gw)"/>
<ellipse cx="317.5" cy="601.1999999999999" rx="1.5" ry="1" fill="#2a2a2d"/>
<rect x="296.6" y="617" width="16.8" height="16.4" fill="url(#g2)"/>
<rect x="314" y="615" width="4.6" height="19.4" rx="1.6" fill="url(#gw)"/>
<ellipse cx="316.3" cy="633.1999999999999" rx="1.5" ry="1" fill="#2a2a2d"/>
<path d="M295.8 663.2V671.4000000000001L302.2 668.7760000000001z" fill="#a6a6aa"/>
<rect x="303" y="667" width="12" height="14.2" fill="url(#g2)"/>
<rect x="315" y="666" width="4.6" height="16.2" rx="0.4" fill="url(#gw)"/>
<rect x="296.6" y="697" width="16.8" height="16.4" fill="url(#g2)"/>
<rect x="313.8" y="696" width="4.6" height="18.4" rx="0.4" fill="url(#gw)"/>
<path d="M303.4 741.6H306.6V750.4Q308 752 309.6 750.4V741.6H312.8V761Q312.8 765.4 308.1 765.4Q303.4 765.4 303.4 761z" fill="url(#g1)"/>
<path d="M303.4 756Q308 759.4 312.8 756V761Q312.8 765.4 308.1 765.4Q303.4 765.4 303.4 761z" fill="#a2a2a6"/>
<path d="M295.8 753H300.4M320.4 753H315.8" stroke="#f0f0f0" stroke-width="1.3"/><path d="M302 753l-2.8-2.2v4.4zM314.2 753l2.8-2.2v4.4z" fill="#f0f0f0"/>
</svg>

<!-- ===== VIEWPORT ===== -->
<div id="vp">
<svg style="left:0;top:0" width="477" height="915" viewBox="328 20 477 915">
<defs>
<linearGradient id="shg" x1="0" y1="0" x2="0" y2="1"><stop offset="0" stop-color="#a3a3a7"/><stop offset="1" stop-color="#b4b4b7"/></linearGradient>
<linearGradient id="bodyg" x1="0" y1="0" x2="1" y2="0"><stop offset="0" stop-color="#6c6c6c"/><stop offset=".14" stop-color="#a2a2a2"/><stop offset=".42" stop-color="#cecece"/><stop offset=".62" stop-color="#c8c8c8"/><stop offset=".86" stop-color="#9c9c9c"/><stop offset="1" stop-color="#707070"/></linearGradient>
<radialGradient id="headg" cx=".5" cy=".42" r=".6"><stop offset="0" stop-color="#dadada"/><stop offset=".55" stop-color="#c4c4c4"/><stop offset=".85" stop-color="#a4a4a4"/><stop offset="1" stop-color="#8a8a8a"/></radialGradient>
<radialGradient id="rumpg" cx=".5" cy=".25" r=".8"><stop offset="0" stop-color="#d0d0d0"/><stop offset=".5" stop-color="#b8b8b8"/><stop offset="1" stop-color="#868686"/></radialGradient><linearGradient id="rumpv" x1="0" y1="0" x2="0" y2="1"><stop offset="0" stop-color="#fff" stop-opacity=".12"/><stop offset=".55" stop-color="#888" stop-opacity="0"/><stop offset="1" stop-color="#444" stop-opacity=".28"/></linearGradient><radialGradient id="hipg" cx=".45" cy=".35" r=".7"><stop offset="0" stop-color="#cecece"/><stop offset=".6" stop-color="#b2b2b2"/><stop offset="1" stop-color="#848484"/></radialGradient>
<linearGradient id="tailg" x1="0" y1="0" x2="1" y2="0"><stop offset="0" stop-color="#9a9a9a"/><stop offset=".35" stop-color="#d2d2d2"/><stop offset=".6" stop-color="#dadada"/><stop offset="1" stop-color="#a2a2a2"/></linearGradient>
<linearGradient id="cylg" x1="0" y1="0" x2="1" y2="0"><stop offset="0" stop-color="#54cc68" stop-opacity=".8"/><stop offset=".12" stop-color="#54cc68" stop-opacity=".76"/><stop offset=".16" stop-color="#5ecc70" stop-opacity=".46"/><stop offset=".8" stop-color="#62cf74" stop-opacity=".42"/><stop offset=".9" stop-color="#6ad47c" stop-opacity=".40"/><stop offset="1" stop-color="#70d680" stop-opacity=".44"/></linearGradient>
<linearGradient id="glg" gradientUnits="userSpaceOnUse" x1="0" y1="20" x2="0" y2="935"><stop offset="0" stop-color="#b4b4b9" stop-opacity=".3"/><stop offset=".35" stop-color="#b2b2b7" stop-opacity=".45"/><stop offset=".62" stop-color="#b0b0b5" stop-opacity=".58"/><stop offset="1" stop-color="#b0b0b5" stop-opacity=".58"/></linearGradient>
<linearGradient id="axg" gradientUnits="userSpaceOnUse" x1="0" y1="20" x2="0" y2="935"><stop offset="0" stop-color="#56565b" stop-opacity=".72"/><stop offset=".5" stop-color="#707075" stop-opacity=".6"/><stop offset="1" stop-color="#77777c" stop-opacity=".5"/></linearGradient>
<filter id="furf" x="-5%" y="-5%" width="110%" height="110%"><feTurbulence type="fractalNoise" baseFrequency=".07" numOctaves="2" seed="4" result="n"/><feDisplacementMap in="SourceGraphic" in2="n" scale="4" xChannelSelector="R" yChannelSelector="G"/></filter>
<clipPath id="vclip"><rect x="328" y="20" width="477" height="915"/></clipPath>
</defs>
<g clip-path="url(#vclip)">
<path d="M417 335.5Q426 335 433 342Q440 350 445 356Q458 357 474 359Q488 366 498 376L515 402 535 419 556 440 566 450 566 470 560 600 455 606Q446 611 438 612Q428 615 420 612Q410 606 404 601L390 590Q383 584 381 578Q379 568 374.5 563Q366 556 361 548Q358 536 361 526Q370 518 381 512Q396 506 407 498Q411 480 410 457L409 406Q404 388 398.5 371Q397 358 400 350Q406 338 417 335.5z" fill="url(#shg)"/>
<path d="M338.5 20L305.5 935" stroke="url(#glg)" stroke-width="1"/>
<path d="M405.5 20L373.7 935" stroke="url(#glg)" stroke-width="1"/>
<path d="M472 20L438.9 935" stroke="url(#glg)" stroke-width="1"/>
<path d="M540 20L503.4 935" stroke="url(#axg)" stroke-width="1"/>
<path d="M607 20L567.9 935" stroke="url(#glg)" stroke-width="1"/>
<path d="M674.5 20L632.3 935" stroke="url(#glg)" stroke-width="1"/>
<path d="M742 20L696.8 935" stroke="url(#glg)" stroke-width="1"/>
<path d="M809.5 20L761.3 935" stroke="url(#glg)" stroke-width="1"/>
<path d="M328 8.6L805 26.4" stroke="url(#glg)" stroke-width="1"/>
<path d="M328 73.5L805 94" stroke="url(#glg)" stroke-width="1"/>
<path d="M328 141.6L805 161.3" stroke="url(#glg)" stroke-width="1"/>
<path d="M328 209L805 228.7" stroke="url(#glg)" stroke-width="1"/>
<path d="M328 275.1L805 296.2" stroke="url(#glg)" stroke-width="1"/>
<path d="M328 341.3L805 361.7" stroke="url(#glg)" stroke-width="1"/>
<path d="M328 406.8L805 427.8" stroke="url(#glg)" stroke-width="1"/>
<path d="M328 472.3L805 493.3" stroke="url(#glg)" stroke-width="1"/>
<path d="M328 538.5L805 558.5" stroke="#77777c" stroke-opacity=".55" stroke-width="1"/>
<path d="M328 601L805 620.8" stroke="url(#glg)" stroke-width="1"/>
<path d="M328 665.5L805 685.2" stroke="url(#glg)" stroke-width="1"/>
<path d="M328 728.9L805 747.9" stroke="url(#glg)" stroke-width="1"/>
<path d="M328 792.3L805 811.3" stroke="url(#glg)" stroke-width="1"/>
<path d="M328 855L805 874" stroke="url(#glg)" stroke-width="1"/>
<path d="M328 917L805 934.9" stroke="url(#glg)" stroke-width="1"/>
<path d="M497 450Q501 441 505 440.8Q515 445 524 449.6Q530 442 535 440.8Q540 444 543 450.5z" fill="#d0d0d5"/>
<circle cx="484.3" cy="456.4" r="10.8" fill="url(#hipg)"/><circle cx="561.3" cy="458.2" r="10.4" fill="url(#hipg)"/>
<ellipse cx="521" cy="467.5" rx="61.6" ry="10" transform="rotate(2.4 521 467.5)" fill="#6fd47e" fill-opacity=".5"/>
<path d="M476 470Q478 452 496 449.6Q510 447.6 524.7 451.4Q540 447.8 552 449.6Q567 452 568.4 470Q569.4 490 566 508Q562.6 532 564 556Q567.4 584 567.6 606Q566.6 634 559.7 643L553 660 548.6 668.4H480.2L476.8 658Q470.6 640 471.2 616Q473.4 588 477 560Q479 532 476.4 506Q474.6 488 476 470z" fill="url(#bodyg)"/>
<path d="M476 470Q478 452 496 449.6Q510 447.6 524.7 451.4Q540 447.8 552 449.6Q567 452 568.4 470Q568.6 474 568 478Q522 486 476 476Q475.6 473 476 470z" fill="url(#rumpg)"/>
<path d="M476 470Q478 452 496 449.6Q510 447.6 524.7 451.4Q540 447.8 552 449.6Q567 452 568.4 470Q568.6 474 568 478Q522 486 476 476Q475.6 473 476 470z" fill="url(#rumpv)"/>
<path d="M477.6 463Q482 449 495.4 450.4M567.4 465Q563 451 550.6 450.6" fill="none" stroke="#7a7a7a" stroke-opacity=".45" stroke-width="1"/>
<path d="M459.4 466.4L452.6 664Q454 672 478 675Q515 679.6 550 677Q574 675 576.4 669.6L582.6 471.6Q560 479 521 477.6Q478 476 459.4 466.4z" fill="url(#cylg)"/>
<path d="M452.8 659Q458 654.6 470.8 653.6L477.6 673.6Q455 671.6 452.6 664z" fill="#d6f2d8" fill-opacity=".32"/>
<rect x="506.2" y="474.6" width="28.2" height="76.8" rx="14" fill="url(#tailg)"/>
<path d="M511 486q3.6 30 1 56M516 480q4.6 34 2 68M522 479q3.6 36 2 70M528 482q2.6 32 0 64" fill="none" stroke="#8e8e8e" stroke-opacity=".4" stroke-width=".7"/>
<path d="M506.4 500Q505 530 509 546Q514 552 521 551.4Q511 540 510.6 500z" fill="#7a9a7e" fill-opacity=".25"/>
<path d="M481.9 651.3Q486 644 491.3 637.6Q495 632 499.9 629Q506 626 513.5 625.7Q520 626 525.5 628.2Q531 632 535.8 637.6Q541 644 544.3 649.6L547.7 659.9 548.6 668.4Q554 672 559.7 677Q564.6 681 567.4 685.5Q569.4 690 568.3 695.8Q567 703 563.1 709.5Q557 714.6 549.5 718L542.6 723.1Q544.6 726 544.3 730Q543 736 539.2 740.2Q533 745.4 525.5 747.9Q518 750 510.1 749.6Q501.6 748.6 494.7 745.4Q487.6 741 482.8 735.1Q479.2 729 477.6 723.1L476.8 718Q470.6 715.6 465.7 711.2Q460.6 706 458 699.2Q456 693 456.2 687.2Q458 681 462.2 677Q468 673.6 474.2 671.8Q478 669 480.2 665Q481.4 658 481.9 651.3z" fill="url(#headg)"/>
<clipPath id="hclip"><path d="M481.9 651.3Q486 644 491.3 637.6Q495 632 499.9 629Q506 626 513.5 625.7Q520 626 525.5 628.2Q531 632 535.8 637.6Q541 644 544.3 649.6L547.7 659.9 548.6 668.4Q554 672 559.7 677Q564.6 681 567.4 685.5Q569.4 690 568.3 695.8Q567 703 563.1 709.5Q557 714.6 549.5 718L542.6 723.1Q544.6 726 544.3 730Q543 736 539.2 740.2Q533 745.4 525.5 747.9Q518 750 510.1 749.6Q501.6 748.6 494.7 745.4Q487.6 741 482.8 735.1Q479.2 729 477.6 723.1L476.8 718Q470.6 715.6 465.7 711.2Q460.6 706 458 699.2Q456 693 456.2 687.2Q458 681 462.2 677Q468 673.6 474.2 671.8Q478 669 480.2 665Q481.4 658 481.9 651.3z"/></clipPath>
<g clip-path="url(#hclip)"><g filter="url(#furf)"><path d="M492.0 642.4Q503.0 653.8 514.0 656.0Q525.0 653.8 536.0 642.4M488.8 646.5Q501.3 659.5 513.8 662.0Q526.3 659.5 538.8 646.5M485.6 650.6Q499.6 665.2 513.6 668.0Q527.6 665.2 541.6 650.6M482.4 654.8Q497.9 670.9 513.4 674.0Q528.9 670.9 544.4 654.8M479.1 658.9Q496.1 676.6 513.1 680.0Q530.1 676.6 547.1 658.9M475.9 663.1Q494.4 682.3 512.9 686.0Q531.4 682.3 549.9 663.1M472.7 667.2Q492.7 688.0 512.7 692.0Q532.7 688.0 552.7 667.2M469.5 671.3Q491.0 693.7 512.5 698.0Q534.0 693.7 555.5 671.3M466.3 675.5Q489.3 699.4 512.3 704.0Q535.3 699.4 558.3 675.5M463.1 679.6Q487.6 705.1 512.1 710.0Q536.6 705.1 561.1 679.6M459.9 683.8Q485.9 710.8 511.9 716.0Q537.9 710.8 563.9 683.8M459.7 689.8Q485.7 716.8 511.7 722.0Q537.7 716.8 563.7 689.8M459.4 695.8Q485.4 722.8 511.4 728.0Q537.5 722.8 563.5 695.8M459.2 701.8Q485.2 728.8 511.2 734.0Q537.2 728.8 563.2 701.8M459.0 707.8Q485.0 734.8 511.0 740.0Q537.0 734.8 563.0 707.8M458.8 713.8Q484.8 740.8 510.8 746.0Q536.8 740.8 562.8 713.8M458.6 719.8Q484.6 746.8 510.6 752.0Q536.6 746.8 562.6 719.8" fill="none" stroke="#6a6a6a" stroke-opacity=".26" stroke-width=".9"/>
<path d="M492.0 645.4Q503.0 656.8 514.0 659.0Q525.0 656.8 536.0 645.4M488.8 649.5Q501.3 662.5 513.8 665.0Q526.3 662.5 538.8 649.5M485.6 653.6Q499.6 668.2 513.6 671.0Q527.6 668.2 541.6 653.6M482.4 657.8Q497.9 673.9 513.4 677.0Q528.9 673.9 544.4 657.8M479.1 661.9Q496.1 679.6 513.1 683.0Q530.1 679.6 547.1 661.9M475.9 666.1Q494.4 685.3 512.9 689.0Q531.4 685.3 549.9 666.1M472.7 670.2Q492.7 691.0 512.7 695.0Q532.7 691.0 552.7 670.2M469.5 674.3Q491.0 696.7 512.5 701.0Q534.0 696.7 555.5 674.3M466.3 678.5Q489.3 702.4 512.3 707.0Q535.3 702.4 558.3 678.5M463.1 682.6Q487.6 708.1 512.1 713.0Q536.6 708.1 561.1 682.6M459.9 686.8Q485.9 713.8 511.9 719.0Q537.9 713.8 563.9 686.8M459.7 692.8Q485.7 719.8 511.7 725.0Q537.7 719.8 563.7 692.8M459.4 698.8Q485.4 725.8 511.4 731.0Q537.5 725.8 563.5 698.8M459.2 704.8Q485.2 731.8 511.2 737.0Q537.2 731.8 563.2 704.8M459.0 710.8Q485.0 737.8 511.0 743.0Q537.0 737.8 563.0 710.8M458.8 716.8Q484.8 743.8 510.8 749.0Q536.8 743.8 562.8 716.8M458.6 722.8Q484.6 749.8 510.6 755.0Q536.6 749.8 562.6 722.8" fill="none" stroke="#f8f8f8" stroke-opacity=".3" stroke-width=".9"/></g></g>
<path d="M458.4 690Q466 700 477 716M567.6 690Q560 702 549 716" fill="none" stroke="#777" stroke-opacity=".3" stroke-width="1"/>
<rect x="517.6" y="526.8" width="40.4" height="40.3" fill="#c2cc3c" fill-opacity=".5"/>
<path d="M517.6 526.8H558" fill="none" stroke="#86e27a" stroke-width="1"/><path d="M558 526.8V567.1" stroke="#e0a868" stroke-opacity=".9" stroke-width="1"/>
<circle cx="517.6" cy="567.1" r="80" fill="none" stroke="#1414f4" stroke-width="1.1"/>
<path d="M437.6 567.1A80 28 0 0 0 597.6 567.1" fill="none" stroke="#22ee30" stroke-width="1.1"/>
<path d="M517.6 487.1A21 80 0 0 0 517.6 647.1" fill="none" stroke="#f41414" stroke-width="1.1"/>
<path d="M517.6 567.1V496" stroke="#22ee30" stroke-width="1.1"/><path d="M517.6 487.6l4.7 9.4h-9.4z" fill="#10ee20"/>
<path d="M517.6 567.1H589" stroke="#f41414" stroke-width="1.1"/><path d="M597.6 567.1l-9.4 -4.4v8.8z" fill="#f40c0c"/>
<path d="M517.6 567.1L501.6 588.6" stroke="#1414f4" stroke-width="1.1"/><circle cx="500.8" cy="589.8" r="4" fill="#0808e8"/>
<ellipse cx="478" cy="606.5" rx="10.2" ry="12.4" fill="#ffff0a"/>
<ellipse cx="515.5" cy="610" rx="12" ry="12" fill="#3f97ea" fill-opacity=".9"/>
<ellipse cx="553" cy="609" rx="10.4" ry="12" fill="#3f97ea" fill-opacity=".85"/>
<g stroke="#54547c" stroke-width=".9" fill="none"><circle cx="587.7" cy="492" r="7"/><circle cx="587.7" cy="492" r="3.8"/><path d="M587.7 482.4V501.6M578.1 492H597.3"/></g>
</g>
<rect x="338.2" y="30.2" width="31.6" height="65.4" rx="8" fill="#222224" fill-opacity=".78"/>
<rect x="338.2" y="102.4" width="31.6" height="95.2" rx="8" fill="#222224" fill-opacity=".78"/>
<rect x="338.2" y="204.4" width="31.6" height="125.2" rx="8" fill="#222224" fill-opacity=".78"/>
<defs><linearGradient id="cubt" x1="0" y1="0" x2="0" y2="1"><stop offset="0" stop-color="#fafafa"/><stop offset="1" stop-color="#dcdcdc"/></linearGradient></defs>
<path d="M355.4 55.8l6.4 -3.6 2 1.2 -6.6 3.8z" fill="#0c0c0e"/><path d="M353.8 39.4L361.8 43.2 353.8 47.4 345.8 43.2z" fill="#cdcdcd"/><path d="M345.8 43.2L353.8 47.4V56L345.8 51.8z" fill="#b2b2b2"/><path d="M361.8 43.2L353.8 47.4V56L361.8 51.8z" fill="#8c8c8c"/><circle cx="345.6" cy="54.6" r="2" fill="#c2c2c2"/>
<path d="M350.9 70.0Q354.0 73.1 357.1 70.0L363.0 73.1 360.7 77.3 358.9 76.2 358.9 85.6 349.1 85.6 349.1 76.2 347.3 77.3 345.0 73.1z" fill="#828286"/>
<circle cx="357.4" cy="74.6" r="1.9" fill="none" stroke="#5a5a5e" stroke-width=".9"/><path d="M349 79.4H359" stroke="#5a5a5e" stroke-width=".9"/><circle cx="345.6" cy="85" r="2" fill="#c2c2c2"/>
<path d="M351.1 112.4Q354.2 115.5 357.3 112.4L363.4 115.5 361.0 119.7 359.2 118.6 359.2 128.0 349.2 128.0 349.2 118.6 347.4 119.7 345.0 115.5z" fill="#6e6e72"/>
<circle cx="348.6" cy="148.6" r="3.2" fill="#5a5a5e"/><path d="M351 146.4L358.6 140" stroke="#5a5a5e" stroke-width="1"/>
<path d="M355.9 146.6Q357.7 148.8 359.5 146.6L363.0 148.8 361.6 151.8 360.6 151.0 360.6 157.6 354.8 157.6 354.8 151.0 353.8 151.8 352.4 148.8z" fill="#5a5a5e"/>
<circle cx="354.2" cy="176" r="4.6" fill="#fafafa"/><path d="M345.6 189.2Q345.4 184 350.4 182.4L354.2 184.6 358 182.4Q363 184 362.8 189.2z" fill="#f4f4f4"/>
<path d="M348.4 216.4Q354 217.6 361.4 214.6L359.6 226.4Q358 230.4 353 230.6Q347.4 230 346.8 226.6z" fill="#1f5f8c"/><path d="M348.4 216.4Q351 217 353.4 216.8L352 230.6Q347.4 230 346.8 226.6z" fill="#2f7ab2"/><ellipse cx="353" cy="227.4" rx="5.4" ry="2.2" fill="#1a4e74" stroke="#78b2e0" stroke-width=".9"/>
<path d="M347.4 250.6L360.8 245 360.2 256Q358.4 260.4 353.4 260.4Q348 259.6 347.4 256z" fill="#48484b"/><path d="M347.4 250.6L354.6 247.6 353.4 260.4Q348 259.6 347.4 256z" fill="#3c3c3f"/>
<circle cx="353.8" cy="280" r="5.7" fill="#fbdcbc"/><path d="M351 284.6H356.8L357 286.8 361.2 288.2V289.8H348V288.4L351 287z" fill="#f6cfa8"/><path d="M356.4 275Q359.6 277 359.5 280.6Q359 284.6 356.8 285.4L357 286.8 361.2 288.2V289.8H355.6Q358 283 356.4 275z" fill="#e4b48c" fill-opacity=".75"/>
<circle cx="353.8" cy="311.6" r="7.7" fill="none" stroke="#f2f2f2" stroke-width="1.1"/><ellipse cx="353.8" cy="311.6" rx="3.4" ry="7.7" fill="none" stroke="#f2f2f2" stroke-width=".9"/><path d="M353.8 303.9V319.3M346.1 311.6H361.5M347.2 307.6H360.4M347.2 315.6H360.4" stroke="#f2f2f2" stroke-width=".9"/><ellipse cx="353.8" cy="311.6" rx="6" ry="7.7" fill="none" stroke="#f2f2f2" stroke-width=".7"/>
</svg>
</div>

<!-- ===== AVATAR EDITOR ===== -->
<div id="av" class="panel">
<span class="t" style="left:13px;top:17.5px;font-size:12.2px;line-height:16.2px;color:#e6e6e6;">아바타 사이즈</span>
<span class="t" style="left:98px;top:17.5px;font-size:12.2px;line-height:16.2px;color:#e6e6e6;">줄자</span>
<span class="t" style="left:136px;top:17.5px;font-size:12.2px;line-height:16.2px;color:#4fa8f0;">배치</span>
<span class="t" style="left:174.6px;top:16.1px;font-size:13px;line-height:17px;color:#e6e6e6;">Fitting Suit</span>
<div class="abs" style="left:5.2px;top:36.4px;width:239.2px;height:1.8px;background:#363639"></div>
<div class="abs" style="left:128px;top:36px;width:38px;height:2.2px;background:#4fa8f0"></div>
<div class="abs" style="left:13.5px;top:52.4px;width:3.7px;height:10.8px;background:#e0e0e0;border-radius:1.8px 1.8px 0 0"></div>
<div class="abs" style="left:25.3px;top:51px;height:12.2px;overflow:hidden;white-space:nowrap;font-size:11.6px;line-height:16px;font-weight:700;color:#f0f0f0"><span style="display:inline-block;transform:scaleY(1.2);transform-origin:0 0">배치판</span></div>
<div class="abs" style="left:352.5px;top:52.4px;width:3.7px;height:10.8px;background:#e0e0e0;border-radius:1.8px 1.8px 0 0"></div>
<div class="abs" style="left:364.3px;top:51px;height:12.2px;overflow:hidden;white-space:nowrap;font-size:11.6px;line-height:16px;font-weight:700;color:#f0f0f0"><span style="display:inline-block;transform:scaleY(1.2);transform-origin:0 0">배치포인트</span></div>
<svg style="left:252.3px;top:77.5px" width="11" height="11" viewBox="0 0 11 11"><path d="M5.5 0.4V10.6M0.4 5.5H10.6" stroke="#f0f0f0" stroke-width="1.5"/></svg>
<svg style="left:271.8px;top:76.1px" width="12" height="13" viewBox="0 0 12 13"><path d="M1.4 1.4L10.8 3" stroke="#f0f0f0" stroke-width="1.2"/><path d="M2 4.2H10.2L9.4 11.2Q9.3 12.2 8.3 12.2H3.9Q2.9 12.2 2.8 11.2z" fill="none" stroke="#f0f0f0" stroke-width="1.2"/><rect x="4.2" y="6.4" width="3.8" height="4.6" fill="#9a9a9e"/></svg>
<svg style="left:291.4px;top:76.1px" width="13" height="13" viewBox="0 0 13 13"><path d="M10.8 8.8A4.9 4.9 0 1 1 9.8 2.8" fill="none" stroke="#f0f0f0" stroke-width="1.4"/><path d="M7.6 0.4L12.4 0.8 11.6 5.4z" fill="#f0f0f0"/></svg>
<svg style="left:311.9px;top:77.3px" width="12" height="11" viewBox="0 0 12 11"><path d="M0.4 1.6Q0.4 0.6 1.4 0.6H4.6L5.8 2H10.4Q11.4 2 11.4 3V3.6H0.4z" fill="#f0f0f0"/><path d="M0.2 4.4H11.8L11 10.2Q10.9 10.8 10.2 10.8H1.8Q1.1 10.8 1 10.2z" fill="#f0f0f0"/></svg>
<svg style="left:331.8px;top:76.8px" width="12" height="12" viewBox="0 0 12 12"><path d="M0.6 1.4Q0.6 0.6 1.4 0.6H10.6Q11.4 0.6 11.4 1.4V10.6Q11.4 11.4 10.6 11.4H1.4Q0.6 11.4 0.6 10.6z" fill="#f0f0f0"/><rect x="3" y="0.6" width="6" height="3.8" fill="#252527"/><rect x="6.6" y="1" width="1.6" height="2.8" fill="#f0f0f0"/><rect x="1.8" y="6.4" width="8.4" height="3.4" fill="#f0f0f0"/><path d="M0.6 5.6H11.4" stroke="#252527" stroke-width=".9"/></svg>
<svg style="left:611.5px;top:78.5px" width="11" height="11" viewBox="0 0 11 11"><path d="M5.5 0.4V10.6M0.4 5.5H10.6" stroke="#f0f0f0" stroke-width="1.5"/></svg>
<svg style="left:630.6px;top:77.1px" width="12" height="13" viewBox="0 0 12 13"><path d="M1.4 1.4L10.8 3" stroke="#f0f0f0" stroke-width="1.2"/><path d="M2 4.2H10.2L9.4 11.2Q9.3 12.2 8.3 12.2H3.9Q2.9 12.2 2.8 11.2z" fill="none" stroke="#f0f0f0" stroke-width="1.2"/><rect x="4.2" y="6.4" width="3.8" height="4.6" fill="#9a9a9e"/></svg>
<svg style="left:650.6px;top:78.3px" width="12" height="11" viewBox="0 0 12 11"><path d="M0.4 1.6Q0.4 0.6 1.4 0.6H4.6L5.8 2H10.4Q11.4 2 11.4 3V3.6H0.4z" fill="#f0f0f0"/><path d="M0.2 4.4H11.8L11 10.2Q10.9 10.8 10.2 10.8H1.8Q1.1 10.8 1 10.2z" fill="#f0f0f0"/></svg>
<svg style="left:670.6px;top:77.8px" width="12" height="12" viewBox="0 0 12 12"><path d="M0.6 1.4Q0.6 0.6 1.4 0.6H10.6Q11.4 0.6 11.4 1.4V10.6Q11.4 11.4 10.6 11.4H1.4Q0.6 11.4 0.6 10.6z" fill="#f0f0f0"/><rect x="3" y="0.6" width="6" height="3.8" fill="#252527"/><rect x="6.6" y="1" width="1.6" height="2.8" fill="#f0f0f0"/><rect x="1.8" y="6.4" width="8.4" height="3.4" fill="#f0f0f0"/><path d="M0.6 5.6H11.4" stroke="#252527" stroke-width=".9"/></svg>
<div class="abs" style="left:14.4px;top:99.3px;width:331.8px;height:259.1px;background:#2d2d30;border-radius:8px;"></div>
<svg style="left:21.5px;top:109.7px" width="7" height="5" viewBox="0 0 7 5"><path d="M0 0H7L3.5 5z" fill="#e6e6e6"/></svg>
<span class="t" style="left:38.3px;top:105.4px;font-size:12px;line-height:16px;color:#e6e6e6;"><span class="lx">Board</span></span>
<svg style="left:45px;top:126px" width="9" height="10" viewBox="0 0 9 10"><path d="M1 0V7.4Q1 8.6 2.2 8.6H8" fill="none" stroke="#58585c" stroke-width="1.1"/></svg>
<span class="t" style="left:58.6px;top:129.4px;font-size:12px;line-height:16px;color:#e6e6e6;"><span class="lx">body</span></span>
<div class="abs" style="left:353.5px;top:101.4px;width:331.6px;height:258.6px;background:#2d2d30;border-radius:8px;"></div>
<div class="abs" style="left:353.5px;top:150.6px;width:331.6px;height:23.2px;background:#2d3346;border-radius:0px;"></div>
<svg style="left:360.7px;top:111.1px" width="7" height="5" viewBox="0 0 7 5"><path d="M0 0H7L3.5 5z" fill="#e6e6e6"/></svg>
<span class="t" style="left:377.3px;top:107.4px;font-size:12px;line-height:16px;color:#e6e6e6;"><span class="lx">Placement</span></span>
<svg style="left:384px;top:126px" width="9" height="63" viewBox="0 0 9 63"><path d="M1.3 0V57.6Q1.3 60.4 3.6 60.4H7.6M1.3 12H7.6M1.3 36.4H7.6" fill="none" stroke="#58585c" stroke-width="1.1"/></svg>
<span class="t" style="left:397.3px;top:131.4px;font-size:12px;line-height:16px;color:#e6e6e6;"><span class="lx">body_001</span></span>
<span class="t" style="left:397.3px;top:155.4px;font-size:12px;line-height:16px;color:#4fa8f0;"><span class="lx">body_002</span></span>
<span class="t" style="left:397.3px;top:179.4px;font-size:12px;line-height:16px;color:#e6e6e6;"><span class="lx">body_003</span></span>
<div class="abs" style="left:337.6px;top:365px;width:9.4px;height:538.8px;background:#0c0c0e;border-radius:0px;"></div>
<div class="abs" style="left:339.4px;top:366.4px;width:6.2px;height:535.0px;background:#58585b;border-radius:3px;"></div>
<div class="abs" style="left:42.4px;top:432.8px;width:285.3px;height:1px;background:#353538"></div>
<div class="abs" style="left:42.4px;top:498.6px;width:285.3px;height:1px;background:#353538"></div>
<div class="abs" style="left:42.4px;top:564.5px;width:285.3px;height:1px;background:#353538"></div>
<div class="abs" style="left:42.4px;top:630.4px;width:285.3px;height:1px;background:#353538"></div>
<div class="abs" style="left:42.4px;top:696.2px;width:285.3px;height:1px;background:#353538"></div>
<div class="abs" style="left:42.4px;top:762.0px;width:285.3px;height:1px;background:#353538"></div>
<div class="abs" style="left:42.4px;top:827.9px;width:285.3px;height:1px;background:#353538"></div>
<div class="abs" style="left:42.4px;top:893.8px;width:285.3px;height:1px;background:#353538"></div>
<span class="t" style="left:42.4px;top:397.3px;font-size:12px;line-height:16px;color:#55555a;">이름</span>
<span class="t" style="left:42.4px;top:463.7px;font-size:12px;line-height:16px;color:#55555a;">관절점 아래</span>
<span class="t" style="left:42.4px;top:529.8px;font-size:12px;line-height:16px;color:#55555a;">관절점 위</span>
<span class="t" style="left:42.4px;top:594.9px;font-size:12px;line-height:16px;color:#55555a;">높이 (mm)</span>
<span class="t" style="left:42.4px;top:660.1px;font-size:12px;line-height:16px;color:#55555a;">X축 길이 (mm)</span>
<span class="t" style="left:42.4px;top:725.7px;font-size:12px;line-height:16px;color:#55555a;">Y축 길이 (mm)</span>
<span class="t" style="left:42.4px;top:792.5px;font-size:12px;line-height:16px;color:#55555a;">손</span>
<span class="t" style="left:42.4px;top:858.1px;font-size:12px;line-height:16px;color:#55555a;">발</span>
<div class="abs" style="left:240.9px;top:391.8px;width:83.4px;height:22.2px;background:#1b1b1e;border-radius:4px;"></div>
<div class="abs" style="left:212px;top:458.0px;width:115.7px;height:21.8px;background:#1b1b1e;border-radius:4px;"></div>
<svg style="left:313.1px;top:466.3px" width="7.6" height="5.6" viewBox="0 0 7.6 5.6"><path d="M0 0H7.6L3.8 5.6z" fill="#88888c"/></svg>
<div class="abs" style="left:212px;top:524.1px;width:115.7px;height:21.8px;background:#1b1b1e;border-radius:4px;"></div>
<svg style="left:313.1px;top:532.4px" width="7.6" height="5.6" viewBox="0 0 7.6 5.6"><path d="M0 0H7.6L3.8 5.6z" fill="#88888c"/></svg>
<div class="abs" style="left:240.9px;top:590.2px;width:83.4px;height:22.0px;background:#1b1b1e;border-radius:4px;"></div>
<span class="t" style="left:251.4px;top:594.6px;font-size:12px;line-height:16px;color:#66666a;"><span class="lx">0.00</span></span>
<div class="abs" style="left:240.9px;top:655.4px;width:83.4px;height:22.0px;background:#1b1b1e;border-radius:4px;"></div>
<span class="t" style="left:251.4px;top:659.8px;font-size:12px;line-height:16px;color:#66666a;"><span class="lx">0.00</span></span>
<div class="abs" style="left:240.9px;top:721.0px;width:83.4px;height:22.0px;background:#1b1b1e;border-radius:4px;"></div>
<span class="t" style="left:251.4px;top:725.4px;font-size:12px;line-height:16px;color:#66666a;"><span class="lx">0.00</span></span>
<div class="abs" style="left:223px;top:792.3px;width:12px;height:12px;border:1.2px solid #47474a;border-radius:3px"></div>
<span class="t" style="left:241.5px;top:791.7px;font-size:12px;line-height:16px;color:#55555a;"><span class="lx">On</span></span>
<div class="abs" style="left:223px;top:857.9px;width:12px;height:12px;border:1.2px solid #47474a;border-radius:3px"></div>
<span class="t" style="left:241.5px;top:857.3px;font-size:12px;line-height:16px;color:#55555a;"><span class="lx">On</span></span>
<div class="abs" style="left:371.9px;top:392.6px;width:314.1px;height:1px;background:#38383b"></div>
<div class="abs" style="left:371.9px;top:421.0px;width:314.1px;height:1px;background:#38383b"></div>
<div class="abs" style="left:371.9px;top:467.7px;width:314.1px;height:1px;background:#38383b"></div>
<div class="abs" style="left:371.9px;top:514.7px;width:314.1px;height:1px;background:#38383b"></div>
<div class="abs" style="left:371.9px;top:562.0px;width:314.1px;height:1px;background:#38383b"></div>
<div class="abs" style="left:371.9px;top:589.8px;width:314.1px;height:1px;background:#38383b"></div>
<span class="t" style="left:371.9px;top:374.4px;font-size:12px;line-height:16px;color:#e6e6e6;">이름</span>
<div class="abs" style="left:598.8px;top:369.2px;width:83.1px;height:21.7px;background:#1b1b1e;border-radius:4px;"></div>
<span class="t" style="left:607.1px;top:373.3px;font-size:13px;line-height:17px;color:#e6e6e6;"><span class="lx">body_002</span></span>
<span class="t" style="left:371.9px;top:402.2px;font-size:12px;line-height:16px;color:#e6e6e6;">배치판</span>
<div class="abs" style="left:570.1px;top:397px;width:115.8px;height:21.7px;background:#1b1b1e;border-radius:5px;"></div>
<span class="t" style="left:574.3px;top:401.3px;font-size:12.5px;line-height:16.5px;color:#e6e6e6;"><span class="lx">body</span></span>
<svg style="left:670.8px;top:404.9px" width="8.4" height="6.2" viewBox="0 0 8.4 6.2"><path d="M0 0H8.4L4.2 6.2z" fill="#f4f4f4"/></svg>
<span class="t" style="left:371.9px;top:438.9px;font-size:12px;line-height:16px;color:#e6e6e6;"><span class="lx">X</span></span>
<div class="abs" style="left:596.5px;top:424.3px;width:81.2px;height:21.4px;background:#1b1b1e;border-radius:4px;"></div>
<span class="t" style="left:607.1px;top:428.3px;font-size:12.5px;line-height:16.5px;color:#e6e6e6;"><span class="lx">10</span></span>
<div class="abs" style="left:596px;top:455.3px;width:84px;height:3.6px;background:#48484b;border-radius:2px;"></div>
<div class="abs" style="left:596px;top:455.3px;width:13.3px;height:3.6px;background:#b8b8b8;border-radius:2px;"></div>
<div class="abs" style="left:605.0px;top:452.8px;width:8.6px;height:8.6px;border-radius:50%;background:#fafafa"></div>
<span class="t" style="left:371.9px;top:486.2px;font-size:12px;line-height:16px;color:#e6e6e6;"><span class="lx">Y</span></span>
<div class="abs" style="left:596.5px;top:471.4px;width:81.2px;height:21.4px;background:#1b1b1e;border-radius:4px;"></div>
<span class="t" style="left:607.1px;top:475.4px;font-size:12.5px;line-height:16.5px;color:#e6e6e6;"><span class="lx">65</span></span>
<div class="abs" style="left:596px;top:502.4px;width:84px;height:3.6px;background:#48484b;border-radius:2px;"></div>
<div class="abs" style="left:596px;top:502.4px;width:53.4px;height:3.6px;background:#b8b8b8;border-radius:2px;"></div>
<div class="abs" style="left:645.1px;top:499.9px;width:8.6px;height:8.6px;border-radius:50%;background:#fafafa"></div>
<span class="t" style="left:371.9px;top:533.7px;font-size:12px;line-height:16px;color:#e6e6e6;">간격</span>
<div class="abs" style="left:596.5px;top:518.3px;width:81.2px;height:21.4px;background:#1b1b1e;border-radius:4px;"></div>
<span class="t" style="left:607.1px;top:522.3px;font-size:12.5px;line-height:16.5px;color:#e6e6e6;"><span class="lx">50</span></span>
<div class="abs" style="left:596px;top:549.3px;width:84px;height:3.6px;background:#48484b;border-radius:2px;"></div>
<div class="abs" style="left:596px;top:549.3px;width:42.3px;height:3.6px;background:#b8b8b8;border-radius:2px;"></div>
<div class="abs" style="left:634.0px;top:546.8px;width:8.6px;height:8.6px;border-radius:50%;background:#fafafa"></div>
<span class="t" style="left:371.9px;top:571.2px;font-size:12px;line-height:16px;color:#e6e6e6;">감싸는 방향</span>
<div class="abs" style="left:570.1px;top:566px;width:115.8px;height:21.6px;background:#1b1b1e;border-radius:5px;"></div>
<span class="t" style="left:574.3px;top:571.3px;font-size:12.2px;line-height:16.2px;color:#e6e6e6;">아래</span>
<svg style="left:670.8px;top:573.9px" width="8.4" height="6.2" viewBox="0 0 8.4 6.2"><path d="M0 0H8.4L4.2 6.2z" fill="#f4f4f4"/></svg>
<div class="abs" style="left:0px;top:913px;width:700px;height:1px;background:#b4b4b4"></div>
<div class="abs" style="left:45px;top:913px;width:85px;height:4px;background:#0a0a0c;border-radius:0px;"></div>
<div class="abs" style="left:45px;top:913px;width:85px;height:1px;background:#3a3a3c"></div>
</div>
<!-- ===== RIGHT STRIP ===== -->
<div id="rs" class="panel" style="left:1517px;top:18px;width:52px;height:917px;overflow:hidden">
<svg style="left:11px;top:5px" width="14" height="15" viewBox="0 0 14 15"><rect x="0.2" y="0" width="2.1" height="2.1" fill="#f6f6f6"/><rect x="4" y="0" width="9.2" height="2.1" fill="#f6f6f6"/><rect x="0.2" y="4" width="2.1" height="2.1" fill="#f6f6f6"/><rect x="4" y="4" width="9.2" height="2.1" fill="#f6f6f6"/><rect x="0.2" y="8" width="2.1" height="2.1" fill="#f6f6f6"/><rect x="4" y="8" width="9.2" height="2.1" fill="#f6f6f6"/><rect x="0.2" y="12" width="2.1" height="2.1" fill="#f6f6f6"/><rect x="4" y="12" width="9.2" height="2.1" fill="#f6f6f6"/></svg>
<svg style="left:41px;top:4px" width="12" height="17" viewBox="0 0 12 17"><path d="M2.8 5.4L11 4V16L5 15.6z" fill="#2f6aa0"/><path d="M8 0.5H11V12L5.4 12.6z" fill="#6bbcff"/></svg>
<div class="abs" style="left:0px;top:28.2px;width:52px;height:1.7px;background:#38383b"></div>
<div class="abs" style="left:34px;top:28px;width:18px;height:2.2px;background:#5ab0f8"></div>
<div class="abs" style="left:10px;top:78.8px;width:42px;height:19.8px;background:#1b1b1e;border-radius:0px;border-top:1px solid #2c2c2f"></div>
<svg style="left:22.0px;top:86.6px" width="6" height="4.4" viewBox="0 0 6 4.4"><path d="M0 0H6L3.0 4.4z" fill="#f4f4f4"/></svg>
<svg style="left:14.5px;top:116px" width="11" height="10" viewBox="0 0 11 10"><path d="M1 5.4L4.2 8.6 10 1.4" fill="none" stroke="#4fa8f0" stroke-width="1.9"/></svg>
<div class="abs" style="left:33px;top:103px;width:19px;height:37px;background:#ffffff;border-radius:0px;"></div>
<div class="abs" style="left:15px;top:142px;width:37px;height:1px;background:#38383b"></div>
<div class="abs" style="left:0px;top:412px;width:52px;height:4.8px;background:#131315;border-radius:0px;"></div>
<div class="abs" style="left:0px;top:416.8px;width:52px;height:20.0px;background:#1c1c1f;border-radius:0px;"></div>
<svg style="left:4px;top:422.5px" width="9" height="9" viewBox="0 0 9 9"><path d="M0.2 4.5H6.6M4 1.4L7.2 4.5 4 7.6" fill="none" stroke="#f0f0f0" stroke-width="1.9"/></svg>
<div class="abs" style="left:14.4px;top:422px;width:1.0px;height:10px;background:#3a3a3d;border-radius:0px;"></div>
</div>

</body>
</html>
